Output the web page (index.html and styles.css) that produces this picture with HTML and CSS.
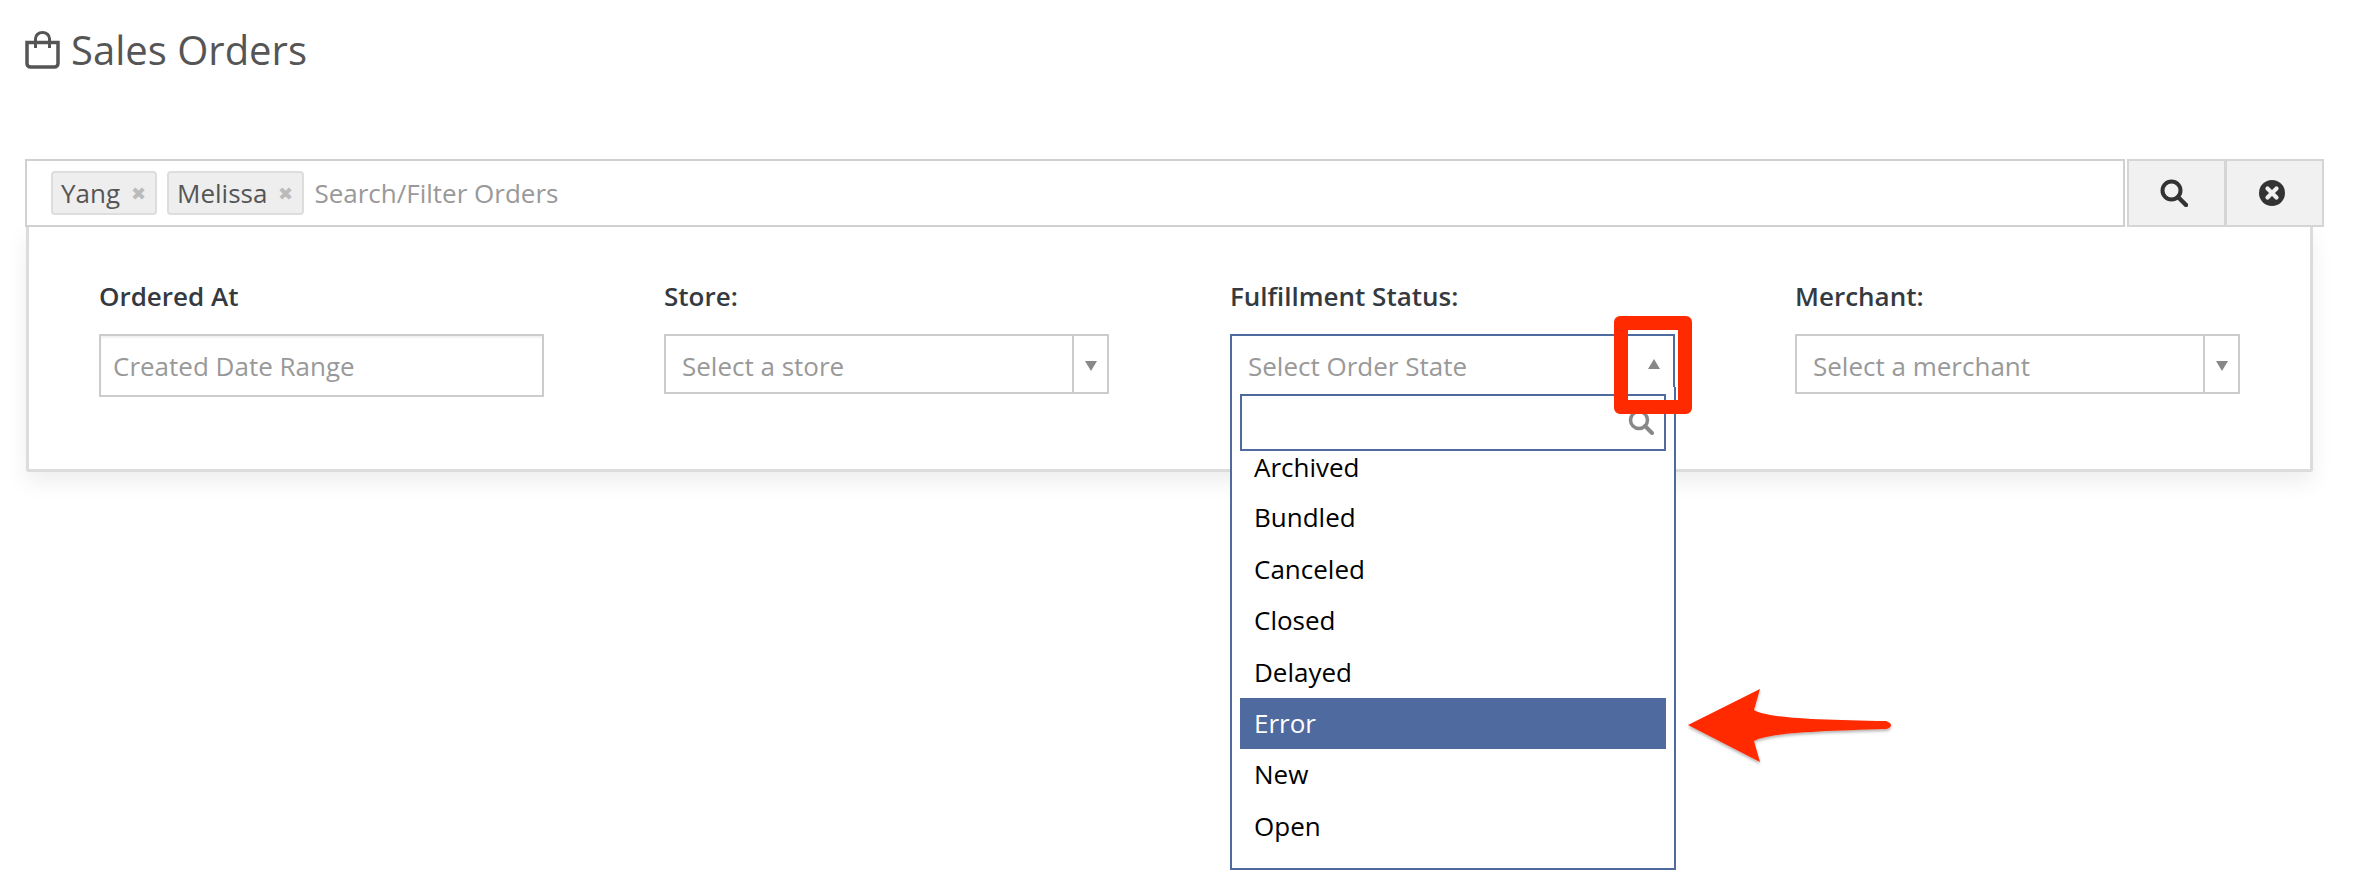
FILE: index.html
```html
<!DOCTYPE html>
<html lang="en">
<head>
<meta charset="utf-8">
<title>Sales Orders</title>
<link rel="stylesheet" href="styles.css">
</head>
<body>
<header class="title">
  <svg class="bag" viewBox="0 0 35 38" width="35" height="38"><path d="M2 11.500h31v21a3.500 3.500 0 0 1-3.500 3.500h-24a3.500 3.500 0 0 1-3.500-3.500z" fill="none" stroke="#555" stroke-width="3.500"/><path d="M10.500 17v-9.500a7 6 0 0 1 14 0v9.500" fill="none" stroke="#555" stroke-width="3"/></svg>
  <h1>Sales Orders</h1>
</header>
<main class="filter">
  <div class="searchrow">
    <div class="searchbox">
      <span class="tag">Yang <i>✖</i></span>
      <span class="tag">Melissa <i>✖</i></span>
      <span class="ph">Search/Filter Orders</span>
    </div>
    <div class="btns">
      <div class="btn">
        <svg viewBox="0 0 28 28" width="28" height="28"><circle cx="11.500" cy="11.500" r="9" fill="none" stroke="#333" stroke-width="4"/><path d="M18 18l8 8" stroke="#333" stroke-width="4.500" stroke-linecap="round"/></svg>
      </div>
      <div class="btn">
        <svg viewBox="0 0 26 26" width="26" height="26"><circle cx="13" cy="13" r="13" fill="#333"/><path d="M8.500 8.500l9 9M17.500 8.500l-9 9" stroke="#f1f1f1" stroke-width="4.200" stroke-linecap="round"/></svg>
      </div>
    </div>
  </div>
  <section class="panel">
    <div class="field">
      <label>Ordered At</label>
      <div class="input">Created Date Range</div>
    </div>
    <div class="field">
      <label>Store:</label>
      <div class="select"><span>Select a store</span><b class="caret"></b></div>
    </div>
    <div class="field status">
      <label>Fulfillment Status:</label>
      <div class="select open">
        <span>Select Order State</span><b class="caret up"></b>
        <div class="drop">
          <div class="dsearch">
            <svg viewBox="0 0 26 26" width="26" height="26"><circle cx="11" cy="11" r="8.500" fill="none" stroke="#888" stroke-width="3.500"/><path d="M17 17l7 7" stroke="#888" stroke-width="4" stroke-linecap="round"/></svg>
          </div>
          <ul class="list">
            <li>Archived</li>
            <li>Bundled</li>
            <li>Canceled</li>
            <li>Closed</li>
            <li>Delayed</li>
            <li class="hl">Error</li>
            <li>New</li>
            <li>Open</li>
          </ul>
        </div>
      </div>
    </div>
    <div class="field">
      <label>Merchant:</label>
      <div class="select"><span>Select a merchant</span><b class="caret"></b></div>
    </div>
  </section>
</main>
<div class="redbox"></div>
<svg class="arrow" viewBox="0 0 210 80" width="210" height="80"><defs><filter id="sh" x="-10%" y="-10%" width="120%" height="130%"><feDropShadow dx="0" dy="2" stdDeviation="1.500" flood-color="#000" flood-opacity=".3"/></filter></defs><path d="M1 37L73 1L67 22C80 30 130 32 199 33Q204 35 204 37Q204 40 199 41C130 43 80 45 67 53L73 74Z" fill="#ff2a00" filter="url(#sh)"/></svg>
</body>
</html>
```
FILE: styles.css
```css
* { box-sizing: border-box; }
html, body { margin: 0; background: #fff; }
body {
  width: 2365px;
  height: 894px;
  overflow: hidden;
  position: relative;
  font-family: "Open Sans", sans-serif;
  font-size: 26px;
  color: #555;
}
.title {
  display: flex;
  align-items: center;
  gap: 11px;
  height: 100px;
  padding: 0 0 0 25px;
}
.bag { flex: none; }
.title h1 {
  margin: 0;
  font-size: 40px;
  font-weight: 400;
  color: #555;
  line-height: 100px;
}
.filter { padding-top: 59px; }
.searchrow {
  display: flex;
  margin-left: 25px;
  width: 2300px;
  height: 68px;
}
.searchbox {
  flex: none;
  width: 2100px;
  height: 68px;
  border: 2px solid #d0d0d0;
  display: flex;
  align-items: center;
  gap: 10px;
  padding-left: 24px;
  background: #fff;
}
.tag {
  display: flex;
  align-items: center;
  gap: 11px;
  height: 44px;
  padding: 0 9px 0 8px;
  background: #eee;
  border: 2px solid #ddd;
  border-radius: 4px;
  color: #555;
}
.tag i {
  font-style: normal;
  font-size: 18px;
  color: #bbb;
}
.ph { color: #999; }
.btns {
  display: flex;
  margin-left: 2px;
}
.btn {
  width: 99px;
  height: 68px;
  background: #f1f1f1;
  border: 2px solid #d5d5d5;
  display: flex;
  align-items: center;
  justify-content: center;
  padding-right: 5px;
}
.btn + .btn { margin-left: -1px; }
.panel {
  margin-left: 26px;
  width: 2287px;
  height: 245px;
  border: 3px solid #dcdcdc;
  border-top: 0;
  border-radius: 0 0 3px 3px;
  box-shadow: 0 10px 22px rgba(0, 0, 0, .07);
  padding: 53px 0 0 70px;
  display: flex;
  gap: 120px;
  background: #fff;
}
.field { width: 445px; flex: none; }
.field.status { margin-left: 1px; }
.field label {
  display: block;
  height: 54px;
  line-height: 32px;
  font-size: 26px;
  font-weight: 600;
  color: #343a40;
}
.input, .select {
  height: 60px;
  border: 2px solid #ccc;
  display: flex;
  align-items: center;
  color: #999;
  background: #fff;
}
.input { height: 63px; padding-left: 12px; box-shadow: inset 0 2px 2px rgba(0, 0, 0, .06); }
.select { position: relative; padding-left: 16px; justify-content: space-between; }
.select > span { padding-top: 4px; }
.caret {
  width: 35px;
  height: 100%;
  border-left: 2px solid #ccc;
  position: relative;
  flex: none;
}
.caret::after {
  content: "";
  position: absolute;
  left: 11px;
  top: 25px;
  border: 6px solid transparent;
  border-top: 10px solid #888;
  border-bottom: 0;
}
.caret.up { width: 36px; border-left: 0; }
.caret.up::after {
  left: 11px;
  top: 23px;
  border-top: 0;
  border-bottom: 10px solid #888;
}
.select.open { border-color: #4f6a9f; }
.drop {
  position: absolute;
  left: -2px;
  top: 51px;
  width: 446px;
  height: 483px;
  background: #fff;
  border: 2px solid #4f6a9f;
  border-top: 0;
  padding: 7px 8px 0;
}
.dsearch {
  height: 57px;
  border: 2px solid #4f6a9f;
  background: #fff;
  position: relative;
}
.dsearch svg { position: absolute; right: 10px; top: 13px; }
.list {
  list-style: none;
  margin: 0;
  padding: 0;
}
.list li {
  height: 51.400px;
  line-height: 51px;
  padding-left: 14px;
  color: #000;
}
.list li:first-child { height: 41.400px; line-height: 33px; }
.list li.hl { background: #4f6a9f; color: #fff; }
.redbox {
  position: absolute;
  left: 1614px;
  top: 316px;
  width: 78px;
  height: 98px;
  border: 14px solid #ff2a00;
  border-radius: 6px;
}
.arrow { position: absolute; left: 1687px; top: 688px; }
```
